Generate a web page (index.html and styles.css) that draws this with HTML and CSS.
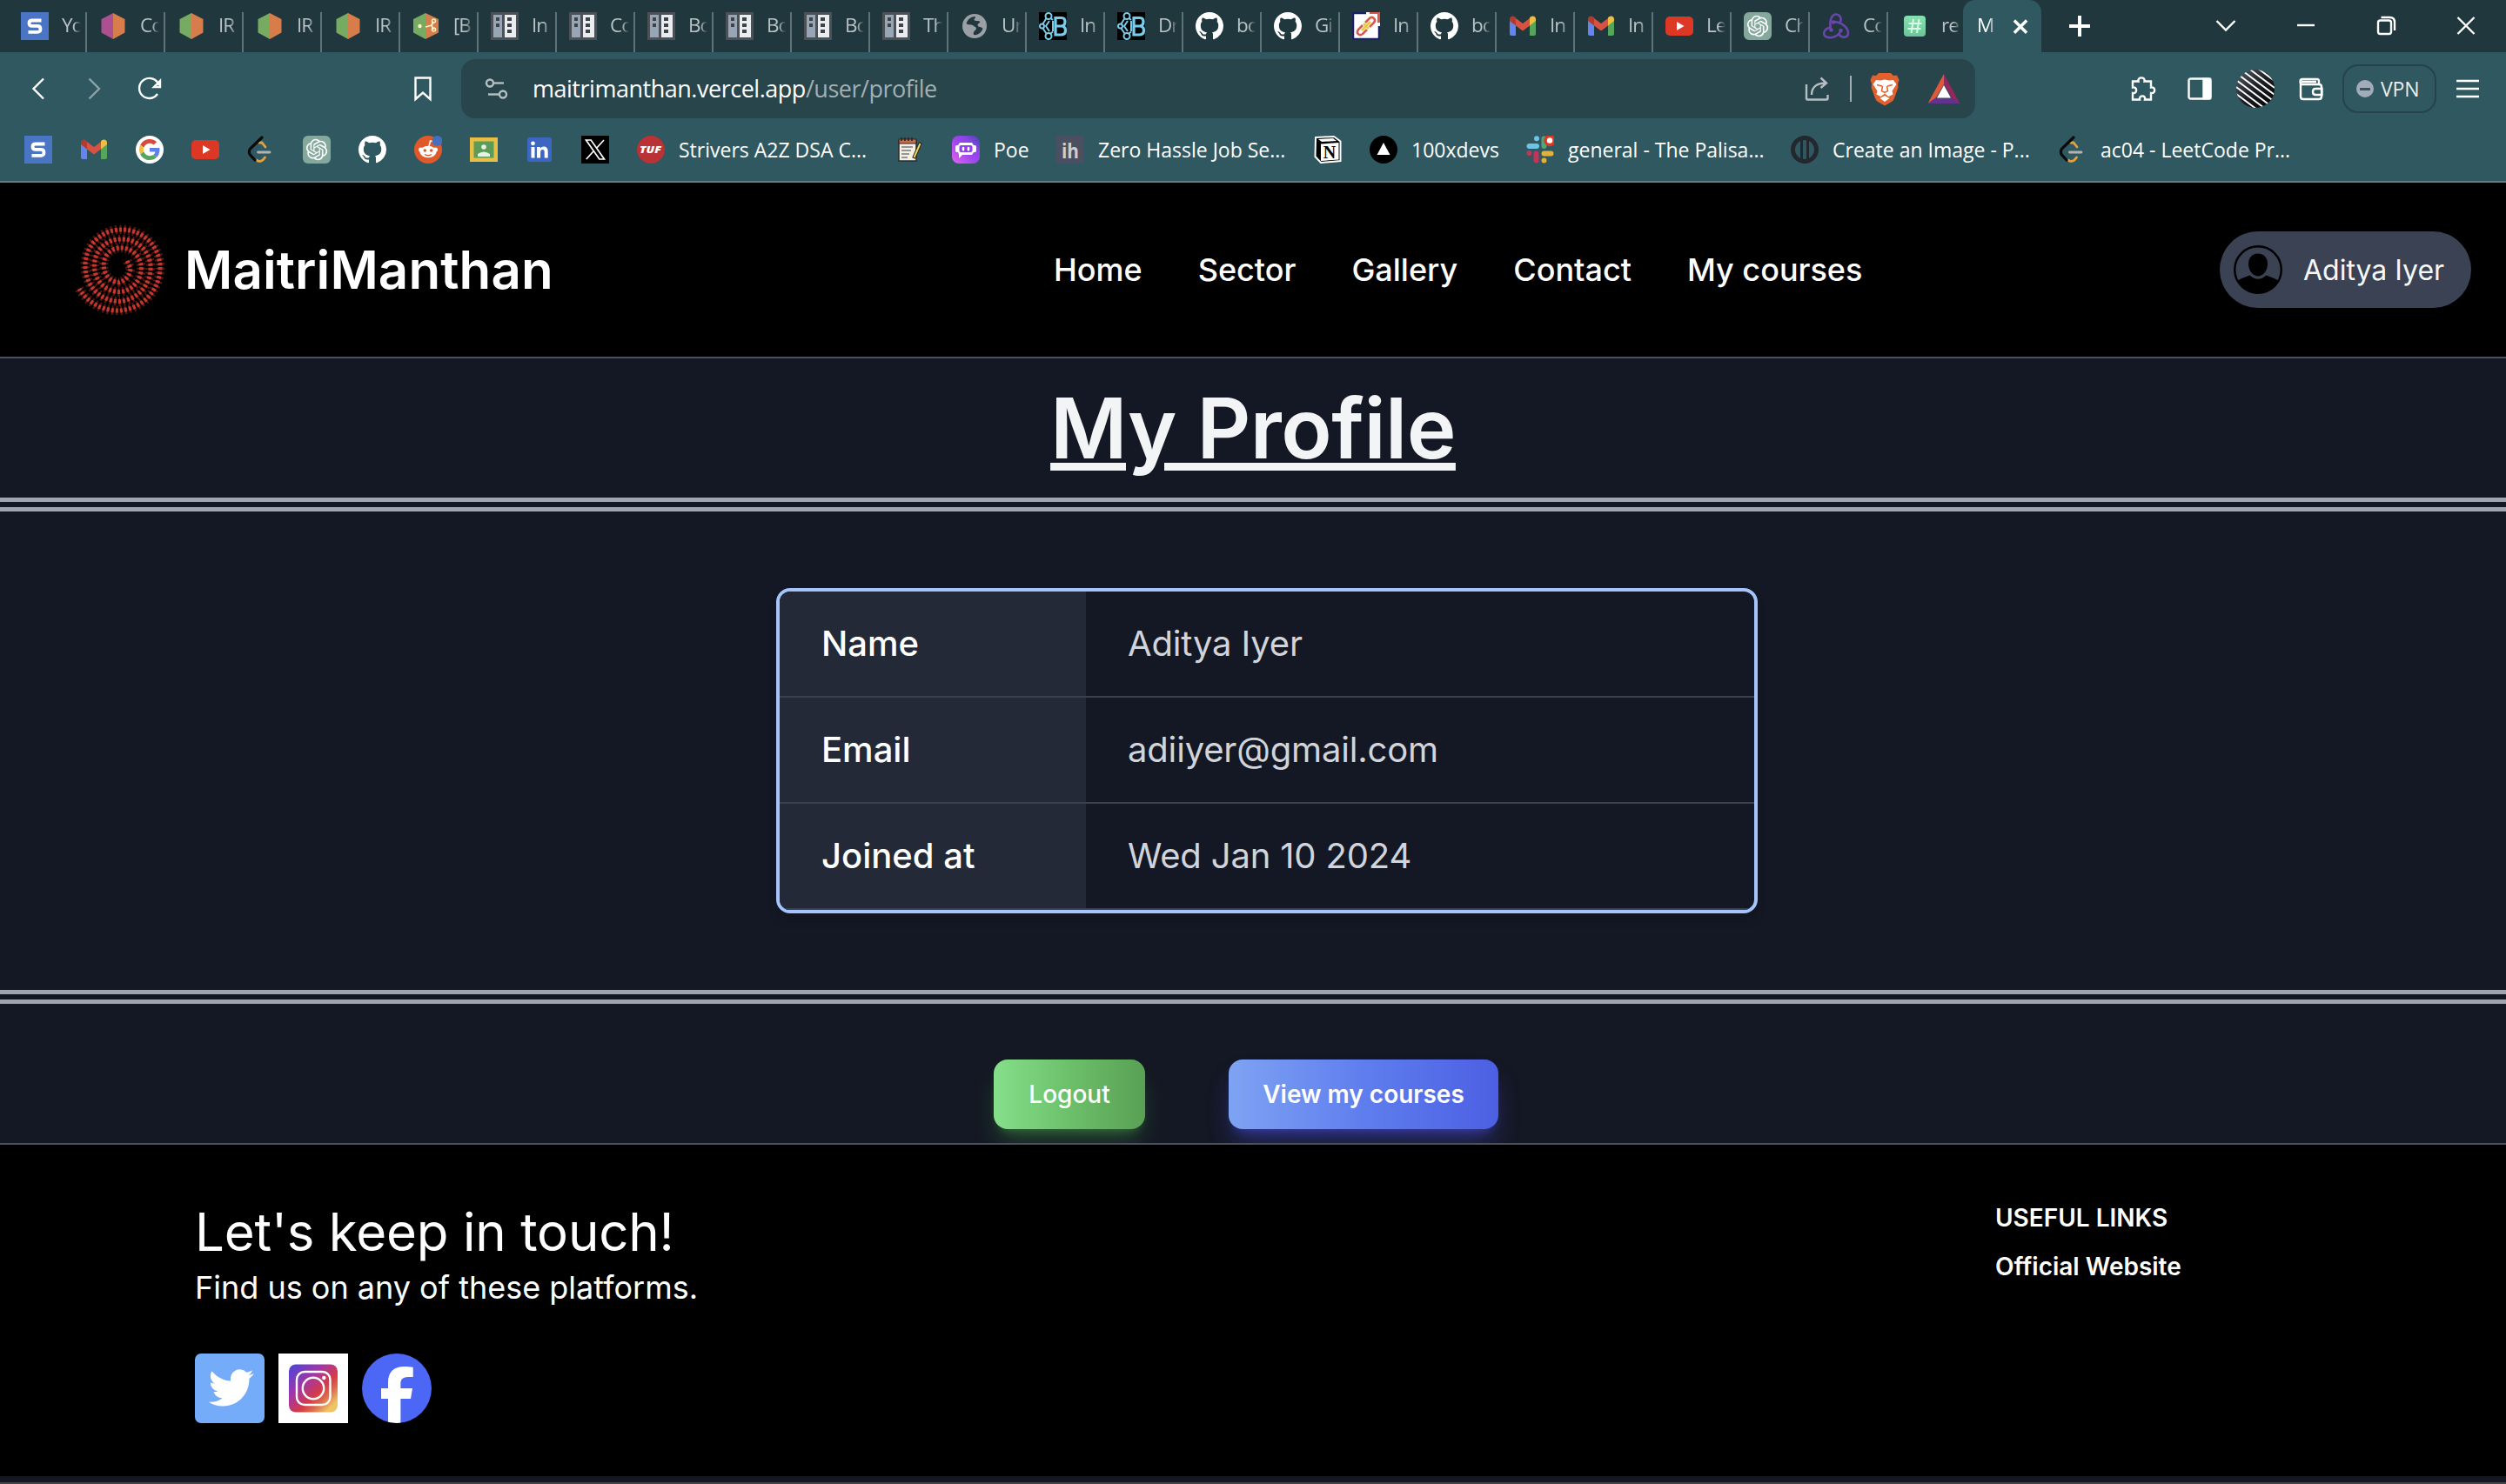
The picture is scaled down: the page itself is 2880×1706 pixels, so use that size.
FILE: index.html
```html
<!DOCTYPE html>
<html lang="en">
<head>
<meta charset="utf-8">
<title>MaitriManthan</title>
<link rel="stylesheet" href="styles.css">
</head>
<body>
<svg class="defs" width="0" height="0" aria-hidden="true">
  <defs>
    <linearGradient id="poe-g" x1="0" y1="1" x2="1" y2="0"><stop offset="0" stop-color="#e763ee"/><stop offset=".45" stop-color="#a047ee"/><stop offset=".7" stop-color="#8a45e4"/><stop offset="1" stop-color="#4048a8"/></linearGradient>
    <linearGradient id="hash-g" x1="0" y1="0" x2="0" y2="1"><stop offset="0" stop-color="#86e0b0"/><stop offset="1" stop-color="#6cc597"/></linearGradient>
    <linearGradient id="ava-g" x1="0" y1="0" x2="1" y2="1"><stop offset="0" stop-color="#5a5d68"/><stop offset=".5" stop-color="#1d1e24"/><stop offset="1" stop-color="#000"/></linearGradient>
    <linearGradient id="ig-g" x1="0" y1="0" x2="1" y2="1"><stop offset=".05" stop-color="#5243d6"/><stop offset=".35" stop-color="#a236a8"/><stop offset=".6" stop-color="#d63c45"/><stop offset=".72" stop-color="#dd6b4d"/><stop offset=".88" stop-color="#edc566"/></linearGradient>
    <clipPath id="ava-c"><circle cx="22" cy="22" r="22"/></clipPath>
    <clipPath id="fb-c"><circle cx="40" cy="40" r="40"/></clipPath>
    <clipPath id="usr-c"><circle cx="28" cy="28" r="27"/></clipPath>
  </defs>
  <symbol id="s" viewBox="0 0 32 32"><path fill="#4a75c4" d="M0 0h32v32H0z"/><path d="M23.500 9.500H13q-3.500 0-3.500 3.200t3.500 3.200h6q3.500 0 3.500 3.500t-3.500 3.400H8.500" fill="none" stroke="#fff" stroke-width="3.800"/></symbol>
  <symbol id="hexp" viewBox="0 0 32 32"><path fill="#ab5091" d="M16 1 2.500 8v15.500L16 31z"/><path fill="#d67d4b" d="m16 1 13.500 7v15.500L16 31z"/></symbol>
  <symbol id="hexg" viewBox="0 0 32 32"><path fill="#77ab62" d="M16 1 2.500 8v15.500L16 31z"/><path fill="#d67d4b" d="m16 1 13.500 7v15.500L16 31z"/></symbol>
  <symbol id="hexs" viewBox="0 0 32 32"><path fill="#77ab62" d="M15 1 1 8v15.500L15 31z"/><path fill="#d67d4b" d="m15 1 15 7v15.500L15 31z"/><circle cx="8.500" cy="16" r="2.200" fill="#fff3c4"/><path d="m15 17 7-2 2-4m-2 4 2 5" fill="none" stroke="#fff3c4" stroke-width="1.800"/><circle cx="24.500" cy="10" r="2" fill="none" stroke="#fff3c4" stroke-width="1.500"/><circle cx="24.500" cy="20" r="2" fill="none" stroke="#fff3c4" stroke-width="1.500"/></symbol>
  <symbol id="bld" viewBox="0 0 32 32"><path fill="#4b5157" d="M0 0h32v32H0z"/><path fill="#98a5b5" d="M3 3h10v26H3z"/><path fill="#e9edef" d="M16 3h13v26H16z"/><path fill="#3d4348" d="M6 6h4v4H6zm0 7h4v4H6zm13-7h5v4h-5zm0 7h5v4h-5zm0 7h5v4h-5z"/></symbol>
  <symbol id="globe" viewBox="0 0 32 32"><circle cx="16" cy="16" r="14" fill="#9aa0a5"/><path d="M17 5c-5 0-9 3-10.500 8 2 2 5 1 7.500 2 1 2 4 1 4 4-1 3-4 2-3 7 5 1 9-3 10.500-7-2-3-5-1-6-4 0-2 2-2 3-4-2-2-5 0-7-2 0-2 2-2 1.500-4z" fill="#20383e"/></symbol>
  <symbol id="rb" viewBox="0 0 32 32"><path d="M0 0h32v32H0z"/><g fill="none" stroke="#79cdea" stroke-width="2"><circle cx="11" cy="4.500" r="3.500"/><circle cx="11" cy="27.500" r="3.500"/><circle cx="3.500" cy="16" r="2.500"/><path d="M8.500 7 4.500 13.500M4.500 18.500l4 6M13.500 7l2.500 2M13.500 24.500l2.500-2M12 10l-4 6 4 6M16 10v12"/></g><path d="M19 6.500h7q4 0 4 4.500t-4 5q4.500.5 4.500 5t-4.500 5H19zM19 16h7" fill="none" stroke="#79cdea" stroke-width="3.200"/></symbol>
  <symbol id="gh" viewBox="0 0 16 16"><path fill="#fff" d="M8 0C3.580 0 0 3.580 0 8c0 3.540 2.290 6.530 5.470 7.590.4.070.55-.17.55-.38 0-.19-.01-.82-.01-1.490-2.010.37-2.530-.49-2.690-.94-.09-.23-.48-.94-.82-1.130-.28-.15-.68-.52-.01-.53.63-.01 1.080.58 1.230.82.72 1.210 1.870.87 2.330.66.070-.52.28-.87.51-1.070-1.780-.2-3.640-.89-3.640-3.950 0-.87.31-1.590.82-2.150-.08-.2-.36-1.020.08-2.120 0 0 .67-.21 2.200.82.64-.18 1.320-.27 2-.27s1.360.09 2 .27c1.530-1.040 2.200-.82 2.200-.82.44 1.100.16 1.920.08 2.120.51.56.82 1.270.82 2.150 0 3.070-1.870 3.750-3.650 3.950.29.25.54.73.54 1.480 0 1.070-.01 1.930-.01 2.200 0 .21.15.46.55.38A8.010 8.010 0 0 0 16 8c0-4.420-3.580-8-8-8z"/></symbol>
  <symbol id="link" viewBox="0 0 32 32"><path fill="#fff" d="M0 0h32v32H0z"/><path d="M16 1H1v30h30V16" fill="none" stroke="#1b1f66" stroke-width="2.500"/><path fill="#e0564a" d="M20 0h12v12h-3V2h-9z"/><g fill="none" stroke-width="2.600"><path stroke="#e0564a" d="m15 12 5-5c3-3 8 1 5 5l-5 5M12 15l-5 5c-3 4 1 8 5 5l5-5"/><path stroke="#e8cb3c" d="m11 21 10-10M13 13l6 6"/></g></symbol>
  <symbol id="gm" viewBox="0 0 32 32"><path fill="#6485ee" d="M1 9v16q0 2 2 2h5V14z"/><path fill="#55a55d" d="M31 9v16q0 2-2 2h-5V14z"/><path fill="#d65242" d="m8 7 8 6 8-6v8.500l-8 6-8-6z"/><path fill="#b33a2c" d="M1 10V8c0-3 3-4.500 5.500-3L8 6.300v9.200z"/><path fill="#efbd41" d="M31 10V8c0-3-3-4.500-5.500-3L24 6.300v9.200z"/></symbol>
  <symbol id="yt" viewBox="0 0 32 32"><rect y="5" width="32" height="22" rx="5" fill="#dc3825"/><path fill="#fff" d="m13 11 8.500 5-8.500 5z"/></symbol>
  <symbol id="gpt" viewBox="0 0 32 32"><rect width="32" height="32" rx="6" fill="#84a99c"/><path transform="translate(3.800 3.800) scale(1.020)" fill="#fff" d="M22.2819 9.8211a5.9847 5.9847 0 0 0-.5157-4.9108 6.0462 6.0462 0 0 0-6.5098-2.9A6.0651 6.0651 0 0 0 4.9807 4.1818a5.9847 5.9847 0 0 0-3.9977 2.9 6.0462 6.0462 0 0 0 .7427 7.0966 5.98 5.98 0 0 0 .511 4.9107 6.051 6.051 0 0 0 6.5146 2.9001A5.9847 5.9847 0 0 0 13.2599 24a6.0557 6.0557 0 0 0 5.7718-4.2058 5.9894 5.9894 0 0 0 3.9977-2.9001 6.0557 6.0557 0 0 0-.7475-7.0729zm-9.022 12.6081a4.4755 4.4755 0 0 1-2.8764-1.0408l.1419-.0804 4.7783-2.7582a.7948.7948 0 0 0 .3927-.6813v-6.7369l2.02 1.1686a.071.071 0 0 1 .038.052v5.5826a4.504 4.504 0 0 1-4.4945 4.4944zm-9.6607-4.1254a4.4708 4.4708 0 0 1-.5346-3.0137l.142.0852 4.783 2.7582a.7712.7712 0 0 0 .7806 0l5.8428-3.3685v2.3324a.0804.0804 0 0 1-.0332.0615L9.74 19.9502a4.4992 4.4992 0 0 1-6.1408-1.6464zM2.3408 7.8956a4.485 4.485 0 0 1 2.3655-1.9728V11.6a.7664.7664 0 0 0 .3879.6765l5.8144 3.3543-2.0201 1.1685a.0757.0757 0 0 1-.071 0l-4.8303-2.7865A4.504 4.504 0 0 1 2.3408 7.872zm16.5963 3.8558L13.1038 8.364 15.1192 7.2a.0757.0757 0 0 1 .071 0l4.8303 2.7913a4.4944 4.4944 0 0 1-.6765 8.1042v-5.6772a.79.79 0 0 0-.407-.667zm2.0107-3.0231l-.142-.0852-4.7735-2.7818a.7759.7759 0 0 0-.7854 0L9.409 9.2297V6.8974a.0662.0662 0 0 1 .0284-.0615l4.8303-2.7866a4.4992 4.4992 0 0 1 6.6802 4.66zM8.3065 12.863l-2.02-1.1638a.0804.0804 0 0 1-.038-.0567V6.0742a4.4992 4.4992 0 0 1 7.3757-3.4537l-.142.0805L8.704 5.459a.7948.7948 0 0 0-.3927.6813zm1.0976-2.3654l2.602-1.4998 2.6069 1.4998v2.9994l-2.5974 1.4997-2.6067-1.4997Z"/></symbol>
  <symbol id="redux" viewBox="0 0 32 32"><g fill="none" stroke="#6a45ab" stroke-width="2.600" stroke-linecap="round"><path d="M10 20C8 10 11 2 16.500 2.500 21 3 23 8 20.500 12"/><path d="M13 11c8 0 17 6 17 13 0 6-8 6-11 1"/><path d="M22 21c-3 7-12 10-18 7-4-3-1-9 4-10"/></g><g fill="#6a45ab"><circle cx="10.500" cy="20.500" r="2.300"/><circle cx="13" cy="11.500" r="2.300"/><circle cx="21.500" cy="21" r="2.300"/></g></symbol>
  <symbol id="hash" viewBox="0 0 32 32"><rect x="4" y="4" width="25" height="24" rx="4" fill="url(#hash-g)"/><path d="m15 8-2.500 16M21.500 8 19 24M9.500 13h15M8.500 19h15" stroke="#d5fbe6" stroke-width="2" fill="none"/></symbol>
  <symbol id="goog" viewBox="0 0 32 32"><circle cx="16" cy="16" r="16" fill="#fff"/><g transform="translate(4 4) scale(.5)"><path fill="#d84b3c" d="M24 9.500c3.540 0 6.710 1.220 9.210 3.600l6.850-6.850C35.900 2.380 30.470 0 24 0 14.620 0 6.510 5.380 2.560 13.220l7.980 6.190C12.430 13.720 17.740 9.500 24 9.500z"/><path fill="#5c82ec" d="M46.980 24.550c0-1.570-.15-3.090-.38-4.550H24v9.020h12.940c-.58 2.960-2.260 5.480-4.780 7.180l7.730 6c4.510-4.180 7.090-10.360 7.090-17.650z"/><path fill="#efbd41" d="M10.530 28.590c-.48-1.450-.76-2.990-.76-4.590s.27-3.140.76-4.590l-7.980-6.190C.92 16.460 0 20.120 0 24c0 3.880.92 7.540 2.560 10.780l7.970-6.190z"/><path fill="#55a55d" d="M24 48c6.480 0 11.930-2.130 15.890-5.810l-7.730-6c-2.150 1.450-4.920 2.300-8.160 2.300-6.260 0-11.570-4.220-13.470-9.910l-7.980 6.190C6.510 42.620 14.620 48 24 48z"/></g></symbol>
  <symbol id="lc" viewBox="0 0 32 32"><g fill="none" stroke-linecap="round" stroke-width="2.800"><path stroke="#e2a23c" d="m14 8 3 0 4 5M11 28c3 3 7 1 9.500-3"/><path stroke="#0a0a0a" stroke-width="3.200" d="M17 2 4 14.500q-3 3.500-.5 7.500L9 28"/><path stroke="#b3b3b3" d="M12.500 19h13.500"/></g></symbol>
  <symbol id="reddit" viewBox="0 0 32 32"><circle cx="16" cy="16" r="16" fill="#e15829"/><path d="m17 12 1.500-6 5 1" stroke="#fff" stroke-width="1.500" fill="none"/><circle cx="7.500" cy="16" r="2.500" fill="#fff"/><circle cx="24.500" cy="16" r="2.500" fill="#fff"/><ellipse cx="16" cy="18.500" rx="9.500" ry="6.800" fill="#fff"/><circle cx="12.300" cy="17" r="1.800" fill="#e15829"/><circle cx="19.700" cy="17" r="1.800" fill="#e15829"/><path d="M12 21.500q4 2.500 8 0" stroke="#e15829" stroke-width="1.300" fill="none"/><circle cx="26.500" cy="6" r="6" fill="#4570bd"/></symbol>
  <symbol id="class" viewBox="0 0 32 32"><path fill="#e8bf45" d="M0 2h32v28H0z"/><path fill="#5c9c5b" d="M4.500 6.500h23v19h-23z"/><circle cx="16" cy="13" r="2.800" fill="#e6f1e3"/><path fill="#e6f1e3" d="M9 24v-3q7-5 14 0v3z"/></symbol>
  <symbol id="in" viewBox="0 0 32 32"><rect x="2" y="2" width="28" height="28" rx="2.500" fill="#3d66c2"/><path fill="#fff" d="M6.500 13h4v12.500h-4zM13 13h3.900v1.800q1.300-2.200 4-2.200 4.800 0 4.800 5.600v7.300h-4v-6.600q0-2.900-2.100-2.900-2.500 0-2.500 3v6.500H13z"/><circle cx="8.500" cy="8.800" r="2.400" fill="#fff"/></symbol>
  <symbol id="x" viewBox="0 0 32 32"><path d="M0 0h32v32H0z"/><path fill="none" stroke="#fff" stroke-width="1.700" d="M5.500 5h5.700l15.300 22h-5.700zM26 5l-8.800 9.800M5.800 27l9-10"/></symbol>
  <symbol id="note" viewBox="0 0 32 32"><path fill="#f4f0e6" stroke="#2b2b2b" stroke-width="1.500" d="M3 6h20v23H3z"/><path fill="#c96a4a" stroke="#2b2b2b" stroke-width="1.200" d="M3 4h20v5H3z"/><path stroke="#222" stroke-width="1.500" d="M6 2v4m4-4v4m4-4v4m4-4v4"/><path stroke="#777" stroke-width="1.500" d="M6 13h13M6 17h11M6 21h9M6 25h7"/><path stroke="#222" stroke-width="4" d="m28 8-8 18"/><path stroke="#f0d557" stroke-width="2" d="m27.500 9-7 16"/></symbol>
  <symbol id="poe" viewBox="0 0 32 32"><rect width="32" height="32" rx="8" fill="url(#poe-g)"/><path fill="#fff" d="M9 8h14l2 3h1.500q1.500 0 1.500 2v4q0 2-1.500 2H25l-2 3H12l-4 4v-4.500L7 19H5.500Q4 19 4 17v-4q0-2 1.500-2H7z"/><rect x="8.500" y="11" width="15" height="8" rx="2" fill="#9044e6"/><path stroke="#fff" stroke-width="2.600" stroke-linecap="round" d="M13 14v2.200m6-2.200v2.200"/></symbol>
  <symbol id="tri" viewBox="0 0 32 32"><circle cx="16" cy="16" r="16"/><path fill="#fff" d="m16 8 7.500 14h-15z"/></symbol>
  <symbol id="slack" viewBox="0 0 32 32"><g stroke-width="6" stroke-linecap="round"><path stroke="#6fc3e6" d="M3.500 12H12M12 3.200v.1"/><path stroke="#4fa77c" d="M20.500 3.500V12"/><path stroke="#c73259" d="M11.500 20.500v8M3.500 20v.1"/><path stroke="#dfb13e" d="M20.500 20.500h8M20.500 28.500v.1"/></g><circle cx="27" cy="5.500" r="5" fill="#fff" stroke="#dc3825" stroke-width="3.500"/></symbol>
  <symbol id="pal" viewBox="0 0 32 32"><circle cx="16" cy="16" r="13.500" fill="none" stroke="#22282d" stroke-width="5"/><path stroke="#22282d" stroke-width="3" d="M12.500 4v24m7-24v24"/></symbol>

  <symbol id="t-back" viewBox="0 0 32 32"><path d="M22 4.500 10.500 16 22 27.500"/></symbol>
  <symbol id="t-fwd" viewBox="0 0 32 32"><path d="M10.500 4.500 22 16 10.500 27.500"/></symbol>
  <symbol id="t-reload" viewBox="0 0 32 32"><path d="M25 22a11.500 11.500 0 1 1 1.500-10M28 7v7h-7z"/></symbol>
  <symbol id="t-bm" viewBox="0 0 32 32"><path d="M7.500 3.500h17v24.500L16 20.500 7.500 28z"/></symbol>
  <symbol id="t-site" viewBox="0 0 32 32"><circle cx="9" cy="9.500" r="4"/><path d="M13 9.500h12"/><circle cx="24" cy="22.500" r="4"/><path d="M20 22.500H7"/></symbol>
  <symbol id="t-share" viewBox="0 0 32 32"><path d="M4 11v16q0 1.500 1.500 1.500H27q1.500 0 1.500-1.500v-4M10 23c0-9 6-13.500 16-13.500M20.500 3.500 27 9.500 20.500 15"/></symbol>
  <symbol id="t-brave" viewBox="0 0 40 40"><path fill="#e4602d" d="m13 2-3 3-4-.5L3.500 10 5 14.500l-.5 4L9 31q1 3 4 4.500l7 4 7-4q3-1.500 4-4.500l4.500-12.500-.5-4L36.500 10 34 4.500l-4 .5-3-3z"/><path fill="#fff" d="M10 10 15 10.500l5-1 5 1 5-.5 3.500 5-5 7.500 1 4-5 2.500-4.500-3.500-4.500 3.500-5-2.500 1-4-5-7.500z"/><path fill="#fff" d="m20 28 5.500 3-5.500 4-5.500-4z"/><path fill="none" stroke="#e4602d" stroke-width="1.500" d="m11 15.500 6 1.500m12-1.500-6 1.500M17.500 17l-1 5.500 3.500 2 3.500-2-1-5.500"/></symbol>
  <symbol id="t-bat" viewBox="0 0 40 40"><path fill="#e0583a" d="M20 3 1.500 37l9-6L20 15z"/><path fill="#93275e" d="m20 3 18.500 34-9-6L20 15z"/><path fill="#63328e" d="m1.500 37 9-6.500h19l9 6.500z"/><path fill="#fff" d="m20 16 8 14.500H12z"/></symbol>
  <symbol id="t-puz" viewBox="0 0 32 32"><path d="M4 7.500h6.500C9 2 19 2 17.500 7.500H25v7c5.500-1 5.500 7.500 0 6.500v7.500h-7c1.500-5.500-7-5.500-6 0H4V21c5.500 1 5.500-7.500 0-6.500z"/></symbol>
  <symbol id="t-side" viewBox="0 0 32 32"><rect x="3.500" y="4.500" width="25" height="23" rx="2"/><path d="M20.500 5h7.500v22h-7.500z" fill="#fff"/></symbol>
  <symbol id="t-wal" viewBox="0 0 32 32"><path d="M4 8v17q0 3 3 3h18q3 0 3-3V14q0-3-3-3H6q-2.500 0-2.500-3T6 5h17q2 0 2 2.500V11M5 8h17M28.500 16H21q-3 0-3 3.500t3 3.500h7.500z"/></symbol>
  <symbol id="t-menu" viewBox="0 0 32 32"><path d="M3 7h26M3 16h26M3 25h26"/></symbol>
  <symbol id="w-plus" viewBox="0 0 32 32"><path d="M4 16h24M16 4v24" stroke-width="4"/></symbol>
  <symbol id="w-chev" viewBox="0 0 32 32"><path d="m5.500 10 10.500 10.500L26.500 10"/></symbol>
  <symbol id="w-min" viewBox="0 0 32 32"><path d="M6 15h20"/></symbol>
  <symbol id="w-max" viewBox="0 0 32 32"><rect x="7" y="9.500" width="15" height="15.500" rx="2.500"/><path d="M10.500 6h10q5.500 0 5.500 5.500V21"/></symbol>
  <symbol id="w-x" viewBox="0 0 32 32"><path d="m6.500 6 19 19M25.500 6l-19 19"/></symbol>
</svg>

<header class="browser">
  <div class="tabs">
    <div class="tab"><svg><use href="#s"/></svg><span>Yo</span></div>
    <div class="tab"><svg><use href="#hexp"/></svg><span>Co</span></div>
    <div class="tab"><svg><use href="#hexg"/></svg><span>IR</span></div>
    <div class="tab"><svg><use href="#hexg"/></svg><span>IR</span></div>
    <div class="tab"><svg><use href="#hexg"/></svg><span>IR</span></div>
    <div class="tab"><svg><use href="#hexs"/></svg><span>[B</span></div>
    <div class="tab"><svg><use href="#bld"/></svg><span>In</span></div>
    <div class="tab"><svg><use href="#bld"/></svg><span>Co</span></div>
    <div class="tab"><svg><use href="#bld"/></svg><span>Bo</span></div>
    <div class="tab"><svg><use href="#bld"/></svg><span>Bo</span></div>
    <div class="tab"><svg><use href="#bld"/></svg><span>Bo</span></div>
    <div class="tab"><svg><use href="#bld"/></svg><span>Th</span></div>
    <div class="tab"><svg><use href="#globe"/></svg><span>Un</span></div>
    <div class="tab"><svg><use href="#rb"/></svg><span>In</span></div>
    <div class="tab"><svg><use href="#rb"/></svg><span>Dr</span></div>
    <div class="tab"><svg><use href="#gh"/></svg><span>bo</span></div>
    <div class="tab"><svg><use href="#gh"/></svg><span>Gi</span></div>
    <div class="tab"><svg><use href="#link"/></svg><span>In</span></div>
    <div class="tab"><svg><use href="#gh"/></svg><span>bo</span></div>
    <div class="tab"><svg><use href="#gm"/></svg><span>In</span></div>
    <div class="tab"><svg><use href="#gm"/></svg><span>In</span></div>
    <div class="tab"><svg><use href="#yt"/></svg><span>Le</span></div>
    <div class="tab"><svg><use href="#gpt"/></svg><span>Ch</span></div>
    <div class="tab"><svg><use href="#redux"/></svg><span>Co</span></div>
    <div class="tab last"><svg><use href="#hash"/></svg><span>re</span></div>
    <div class="tab active"><span>M</span><svg class="line close-tab"><use href="#w-x"/></svg></div>
    <svg class="line plus"><use href="#w-plus"/></svg>
    <div class="window-controls">
      <svg class="line"><use href="#w-chev"/></svg>
      <svg class="line"><use href="#w-min"/></svg>
      <svg class="line"><use href="#w-max"/></svg>
      <svg class="line"><use href="#w-x"/></svg>
    </div>
  </div>

  <div class="toolbar">
    <div class="history">
      <svg class="line"><use href="#t-back"/></svg>
      <svg class="line dim"><use href="#t-fwd"/></svg>
      <svg class="line"><use href="#t-reload"/></svg>
    </div>
    <svg class="line save"><use href="#t-bm"/></svg>
    <div class="address">
      <svg class="line soft"><use href="#t-site"/></svg>
      <div class="url">maitrimanthan.vercel.app<span>/user/profile</span></div>
      <svg class="line soft"><use href="#t-share"/></svg>
      <i class="rule"></i>
      <svg class="big"><use href="#t-brave"/></svg>
      <svg class="big bat"><use href="#t-bat"/></svg>
    </div>
    <svg class="line puzzle"><use href="#t-puz"/></svg>
    <svg class="line side"><use href="#t-side"/></svg>
    <svg class="face" viewBox="0 0 44 44"><g clip-path="url(#ava-c)"><path fill="url(#ava-g)" d="M0 0h44v44H0z"/><path stroke="#fff" stroke-width="1.900" d="M0-28 44 5M0-20l44 33M0-12l44 33M0-4l44 33M0 4l44 33M0 12l44 33M0 20l44 33M0 28l44 33"/></g></svg>
    <svg class="line wallet"><use href="#t-wal"/></svg>
    <div class="vpn"><i></i>VPN</div>
    <svg class="line"><use href="#t-menu"/></svg>
  </div>

  <div class="bookmarks">
    <a><svg><use href="#s"/></svg></a>
    <a><svg><use href="#gm"/></svg></a>
    <a><svg><use href="#goog"/></svg></a>
    <a><svg><use href="#yt"/></svg></a>
    <a><svg><use href="#lc"/></svg></a>
    <a><svg><use href="#gpt"/></svg></a>
    <a><svg><use href="#gh"/></svg></a>
    <a><svg><use href="#reddit"/></svg></a>
    <a><svg><use href="#class"/></svg></a>
    <a><svg><use href="#in"/></svg></a>
    <a><svg><use href="#x"/></svg></a>
    <a><svg viewBox="0 0 32 32"><circle cx="16" cy="16" r="16" fill="#b83236"/><text x="15.500" y="20" text-anchor="middle" textLength="25" lengthAdjust="spacingAndGlyphs" font-size="11" font-weight="800" font-style="italic" fill="#fff">TUF</text></svg><span class="w218">Strivers A2Z DSA C...</span></a>
    <a><svg><use href="#note"/></svg></a>
    <a><svg><use href="#poe"/></svg><span class="w40">Poe</span></a>
    <a><svg viewBox="0 0 32 32"><path fill="#4b4f62" d="M0 0h32v32H0z"/><text x="6" y="26" textLength="20" lengthAdjust="spacingAndGlyphs" font-size="23" font-weight="700" fill="#cdced3">ih</text></svg><span class="w216">Zero Hassle Job Se...</span></a>
    <a><svg viewBox="0 0 32 32"><path fill="#000" stroke="#fff" stroke-width="2" d="m2 2 21-1 7.500 5.500V29L8 31l-6.500-7z"/><path fill="#fff" d="m5 4 17-1 4 3-17 1zM8 9.500 28.500 8v19.500L8 29z"/><text class="serif" x="18" y="25.500" text-anchor="middle" font-size="20" font-weight="700" fill="#000">N</text></svg></a>
    <a><svg><use href="#tri"/></svg><span class="w100">100xdevs</span></a>
    <a><svg><use href="#slack"/></svg><span class="w224">general - The Palisa...</span></a>
    <a><svg><use href="#pal"/></svg><span class="w228">Create an Image - P...</span></a>
    <a><svg><use href="#lc"/></svg><span class="w218">ac04 - LeetCode Pr...</span></a>
  </div>
</header>

<div class="site">
  <nav class="navbar">
    <div class="brand">
      <svg class="logo" viewBox="0 0 130 130">
        <g fill="none" stroke="#dc3c33">
          <path stroke-width="10.500" stroke-opacity=".4" stroke-dasharray="2 3.100" d="M15 87A52 52 0 0 0 61 112A50 50 0 0 0 108 60A44 44 0 0 0 63 19A41 41 0 0 0 22 62A40 40 0 0 0 61 101.500A39 39 0 0 0 97 60A33 33 0 0 0 62 30A30 30 0 0 0 32.500 62A29 29 0 0 0 61 90.500A27 27 0 0 0 86 60A23 23 0 0 0 62 40A19 19 0 0 0 43.500 62A18 18 0 0 0 61 79.500A17 17 0 0 0 74 63L69 53"/>
          <path stroke-width="5" stroke-dasharray="3.200 1.900" stroke-dashoffset=".6" stroke-opacity=".85" d="M15 87A52 52 0 0 0 61 112A50 50 0 0 0 108 60A44 44 0 0 0 63 19A41 41 0 0 0 22 62A40 40 0 0 0 61 101.500A39 39 0 0 0 97 60A33 33 0 0 0 62 30A30 30 0 0 0 32.500 62A29 29 0 0 0 61 90.500A27 27 0 0 0 86 60A23 23 0 0 0 62 40A19 19 0 0 0 43.500 62A18 18 0 0 0 61 79.500A17 17 0 0 0 74 63L69 53"/>
        </g>
      </svg>
      <span>MaitriManthan</span>
    </div>
    <div class="menu"><a>Home</a><a>Sector</a><a>Gallery</a><a>Contact</a><a>My courses</a></div>
    <div class="user">
      <svg viewBox="0 0 56 56"><circle cx="28" cy="28" r="26.800" fill="none" stroke="#000" stroke-width="2.400"/><g clip-path="url(#usr-c)"><path d="M0 43Q9 37.500 18.500 34.500Q28 43 37.500 34.500Q47 37.500 56 43V56H0z"/></g><path d="M28 9.500C35 9.500 39 14.500 39 21.500C39 29 34 35.500 28 35.500C22 35.500 17 29 17 21.500C17 14.500 21 9.500 28 9.500z"/></svg>
      <span>Aditya Iyer</span>
    </div>
  </nav>

  <main>
    <h1>My Profile</h1>
    <hr>
    <table class="profile">
      <tr><th>Name</th><td>Aditya Iyer</td></tr>
      <tr><th>Email</th><td>adiiyer@gmail.com</td></tr>
      <tr><th>Joined at</th><td>Wed Jan 10 2024</td></tr>
    </table>
    <hr>
    <div class="actions">
      <button class="logout">Logout</button>
      <button class="courses">View my courses</button>
    </div>
  </main>

  <footer>
    <div>
      <h2>Let's keep in touch!</h2>
      <p>Find us on any of these platforms.</p>
      <div class="social">
        <svg viewBox="0 0 80 80"><rect width="80" height="80" rx="7" fill="#74acf9"/><path transform="translate(15.800 13.500) scale(2.160)" fill="#fff" d="M23.953 4.570a10 10 0 01-2.825.775 4.958 4.958 0 002.163-2.723c-.951.555-2.005.959-3.127 1.184a4.920 4.920 0 00-8.384 4.482C7.690 8.095 4.067 6.130 1.640 3.162a4.822 4.822 0 00-.666 2.475c0 1.710.870 3.213 2.188 4.096a4.904 4.904 0 01-2.228-.616v.060a4.923 4.923 0 003.946 4.827 4.996 4.996 0 01-2.212.085 4.936 4.936 0 004.604 3.417 9.867 9.867 0 01-6.102 2.105c-.390 0-.779-.023-1.170-.067a13.995 13.995 0 007.557 2.209c9.053 0 13.998-7.496 13.998-13.985 0-.210 0-.420-.015-.630A9.935 9.935 0 0024 4.590z"/></svg>
        <svg viewBox="0 0 80 80"><path fill="#fff" d="M0 0h80v80H0z"/><rect x="12" y="12.500" width="56" height="55" rx="8" fill="url(#ig-g)"/><g fill="none" stroke="#fff" stroke-width="2.400"><rect x="21" y="21" width="38.500" height="38" rx="9"/><circle cx="40" cy="40" r="12.200"/></g><circle cx="52.300" cy="28" r="2.200" fill="#fff"/></svg>
        <svg viewBox="0 0 80 80"><g clip-path="url(#fb-c)"><path fill="#4c66f6" d="M0 0h80v80H0z"/><path fill="#fff" d="M30 80V52h-8V40h8v-7C30 21 37 15 48 15c5 0 8 .4 10.700.8V27H53c-6 0-8.600 3-8.600 7v6H58l-2 12H44.400v28z"/></g></svg>
      </div>
    </div>
    <div class="links"><span>USEFUL LINKS</span><a>Official Website</a></div>
  </footer>
  <div class="edge"></div>
</div>
</body>
</html>
```
FILE: styles.css
```css
* { box-sizing: border-box; margin: 0; padding: 0; }
body { width: 2880px; height: 1706px; overflow: hidden; background: #141824; font-family: Inter, "Liberation Sans", sans-serif; color: #fff; }
svg { display: block; flex: none; }
.defs { position: absolute; }
.line { fill: none; stroke: #fff; stroke-width: 2.4; }
.serif { font-family: "Liberation Serif", serif; }

/* Browser chrome */
.browser { font-family: "Open Sans", "Noto Sans", sans-serif; background: #305860; height: 210px; border-bottom: 2px solid #5a7f85; }
.browser svg { width: 32px; height: 32px; }
.tabs { display: flex; height: 60px; padding-left: 10px; background: #1f373d; }
.tab { display: flex; flex: none; gap: 15px; width: 90px; height: 46px; margin-top: 14px; padding-left: 14px; border-right: 2px solid #5d7378; }
.tab span { width: 23px; height: 32px; overflow: hidden; font-size: 22.5px; letter-spacing: -1px; line-height: 30px; white-space: nowrap; color: #b9c3c5; -webkit-mask-image: linear-gradient(90deg, #000 60%, transparent 96%); mask-image: linear-gradient(90deg, #000 60%, transparent 96%); }
.tab.last { width: 86px; border: 0; }
.tab.active { height: 60px; margin: 0; padding: 14px 12px 0 16px; gap: 16px; border: 0; border-radius: 14px 14px 0 0; background: #305860; }
.tab.active span { color: #fff; }
.browser .close-tab { width: 24px; height: 24px; margin-top: 5px; margin-left: -1px; stroke-width: 4.6; }
.browser .plus { margin: 14px 0 0 28px; }
.window-controls { display: flex; gap: 60px; margin: 14px 0 0 136px; }

.toolbar { display: flex; align-items: center; height: 68px; margin-top: 8px; padding-left: 28px; }
.history { display: flex; gap: 32px; }
.dim { opacity: .45; }
.save { margin: 0 28px 0 282px; }
.address { display: flex; align-items: center; width: 1740px; height: 68px; padding: 0 16px 0 24px; border-radius: 16px; background: #28454b; }
.url { flex: 1; padding-left: 26px; margin-top: -1px; font-size: 27px; letter-spacing: -.48px; white-space: nowrap; }
.url span { color: #a3b0b3; }
.soft { stroke: #b5bec1; }
.rule { width: 2px; height: 30px; margin: 0 18px 0 22px; background: #a3b0b3; }
.browser .big { width: 40px; height: 40px; }
.bat { margin-left: 28px; }
.puzzle { margin-left: 177px; }
.side { margin-left: 33px; }
.browser .face { width: 44px; height: 44px; margin: 0 26px; }
.vpn { display: flex; align-items: center; gap: 8px; width: 108px; height: 56px; margin: 0 20px; padding-left: 14px; border: 2px solid #24434a; border-radius: 18px; font-size: 23px; letter-spacing: -.2px; color: #e8eeee; }
.vpn i { width: 20px; height: 20px; border-radius: 50%; background: linear-gradient(#305860, #305860) center / 12px 3px no-repeat #a3aab9; }

.bookmarks { display: flex; gap: 32px; height: 72px; padding-left: 28px; align-items: center; }
.bookmarks a { display: flex; align-items: center; gap: 16px; }
.bookmarks span { font-size: 23px; line-height: 32px; margin-top: -1px; white-space: nowrap; }
.w40 { width: 40px; }
.w100 { width: 100px; }
.w216 { width: 216px; }
.w218 { width: 218px; }
.w224 { width: 224px; }
.w228 { width: 228px; }

/* Site header */
.navbar { display: flex; align-items: center; height: 202px; padding: 0 40px 0 76px; background: #000; border-bottom: 2px solid #4b505e; }
.brand { display: flex; align-items: center; gap: 6px; width: 1135px; font-size: 60px; font-weight: 600; letter-spacing: .1px; }
.logo { width: 130px; height: 130px; }
.menu { display: flex; gap: 64px; font-size: 36px; font-weight: 500; }
.user { display: flex; align-items: center; gap: 24px; width: 289px; height: 88px; margin-left: auto; padding-left: 16px; border-radius: 44px; background: #3a4254; font-size: 32px; color: #f6f7f9; white-space: nowrap; }
.user svg { width: 56px; height: 56px; }

/* Profile */
main { display: flex; flex-direction: column; align-items: center; height: 902px; padding-top: 32px; }
h1 { font-size: 96px; line-height: 96px; font-weight: 600; letter-spacing: -.55px; color: #f3f4f6; text-decoration: underline; }
hr { width: 100%; height: 16px; border: 0; border-top: 5px solid #a0a4ae; border-bottom: 5px solid #a0a4ae; }
h1 + hr { margin-top: 32px; }
.profile { width: 1128px; height: 374px; margin: 88px 0 88px 32px; border: 4px solid #a5c4fb; border-radius: 16px; border-spacing: 0; overflow: hidden; font-size: 40px; text-align: left; box-shadow: 0 8px 12px rgba(0, 0, 0, .12); }
.profile th, .profile td { height: 122px; border-bottom: 2px solid #3a4050; line-height: 60px; }
.profile th { width: 352px; padding-left: 48px; background: #232936; font-weight: 500; }
.profile td { padding-left: 48px; color: #d1d5db; letter-spacing: -.17px; }
.actions { display: flex; gap: 96px; margin: 64px 16px 0 0; }
button { height: 80px; border: 0; border-radius: 16px; font: 500 28px Inter, sans-serif; color: #fff; white-space: nowrap; }
.logout { width: 174px; background: linear-gradient(90deg, #86df8b, #6cc06a 50%, #59a054); box-shadow: 0 20px 30px -6px rgba(80, 190, 80, .3), 0 8px 12px -8px rgba(80, 190, 80, .5); }
.courses { width: 310px; font-weight: 600; background: linear-gradient(90deg, #7fa3f3, #5f7eee 50%, #4c5fe3); box-shadow: 0 20px 30px -6px rgba(70, 75, 220, .45), 0 8px 12px -8px rgba(70, 75, 220, .7); }

/* Footer */
footer { position: relative; display: flex; justify-content: space-between; height: 383px; padding: 64px 0 0 224px; background: #000; border-top: 2px solid #4b505e; }
h2 { font-size: 60px; line-height: 72px; font-weight: 400; letter-spacing: -.2px; }
footer p { font-size: 36px; line-height: 56px; }
.social { display: flex; gap: 16px; margin-top: 48px; }
.social svg { width: 80px; height: 80px; }
.links { display: flex; flex-direction: column; gap: 16px; width: 587px; font-size: 28px; line-height: 40px; font-weight: 600; }
.edge { height: 9px; border-bottom: 2px solid #444; }
```
